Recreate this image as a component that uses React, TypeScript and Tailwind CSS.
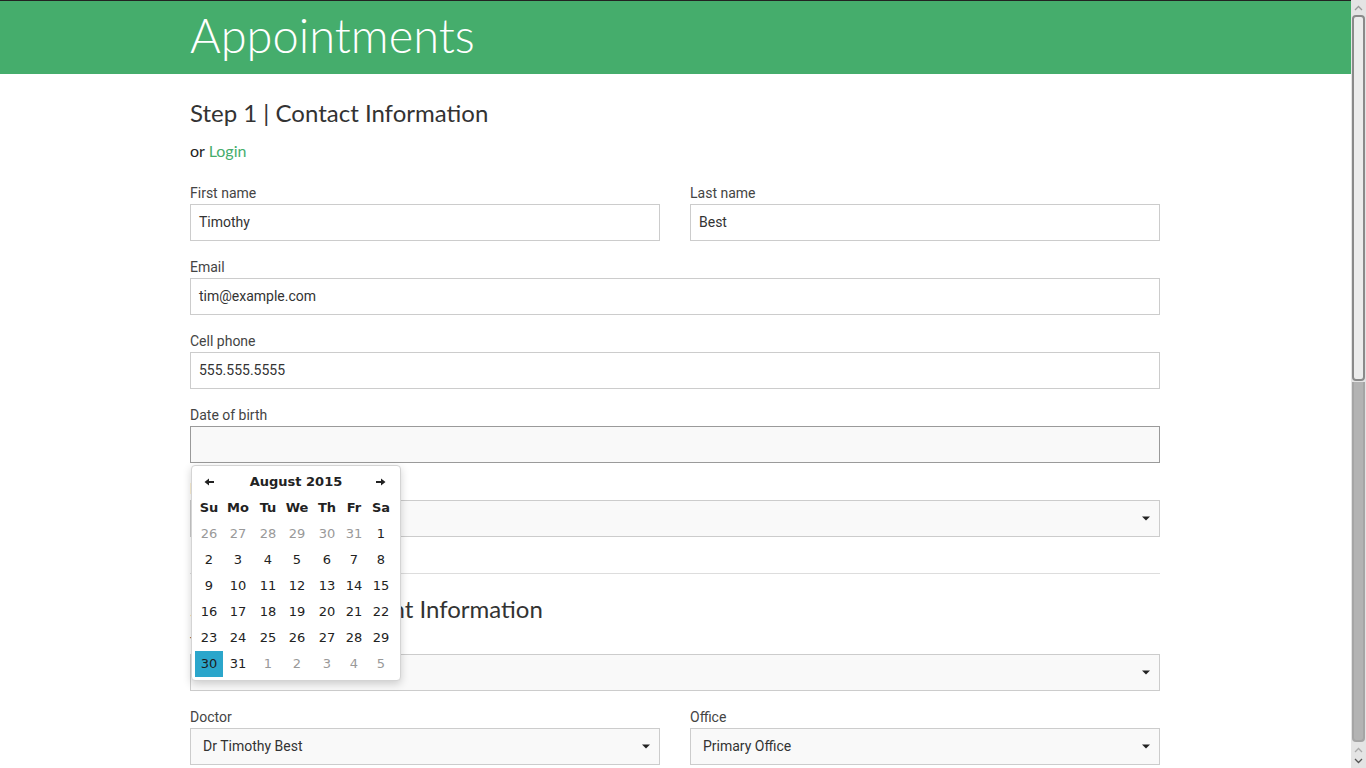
import React from "react"

const days: { d: number; muted?: boolean; active?: boolean }[][] = [
  [{ d: 26, muted: true }, { d: 27, muted: true }, { d: 28, muted: true }, { d: 29, muted: true }, { d: 30, muted: true }, { d: 31, muted: true }, { d: 1 }],
  [{ d: 2 }, { d: 3 }, { d: 4 }, { d: 5 }, { d: 6 }, { d: 7 }, { d: 8 }],
  [{ d: 9 }, { d: 10 }, { d: 11 }, { d: 12 }, { d: 13 }, { d: 14 }, { d: 15 }],
  [{ d: 16 }, { d: 17 }, { d: 18 }, { d: 19 }, { d: 20 }, { d: 21 }, { d: 22 }],
  [{ d: 23 }, { d: 24 }, { d: 25 }, { d: 26 }, { d: 27 }, { d: 28 }, { d: 29 }],
  [{ d: 30, active: true }, { d: 31 }, { d: 1, muted: true }, { d: 2, muted: true }, { d: 3, muted: true }, { d: 4, muted: true }, { d: 5, muted: true }],
]

const weekdays = ["Su", "Mo", "Tu", "We", "Th", "Fr", "Sa"]

const Caret = () => (
  <svg width="8" height="5" viewBox="0 0 8 5" className="shrink-0">
    <path d="M0 0.5 H8 L4 4.5 Z" fill="#222" />
  </svg>
)

const Arrow = ({ left }: { left?: boolean }) => (
  <svg width="10" height="8" viewBox="0 0 10 8" style={left ? { transform: "scaleX(-1)" } : undefined}>
    <path d="M0 3 H5 V0.5 L9.5 4 L5 7.5 V5 H0 Z" fill="#222" />
  </svg>
)

const Label = ({ children }: { children: React.ReactNode }) => (
  <label className="block text-[14px] leading-[20px] text-[#444]">{children}</label>
)

const TextInput = ({ value }: { value: string }) => (
  <div className="mt-px h-[37px] border border-[#ccc] bg-white px-[8px] flex items-center text-[14px] text-[#333]">
    {value}
  </div>
)

const SelectBox = ({ value }: { value?: string }) => (
  <div className="mt-px h-[37px] border border-[#ccc] bg-[#f9f9f9] pl-[12px] pr-[9px] flex items-center justify-between text-[14px] text-[#333]">
    <span>{value}</span>
    <Caret />
  </div>
)

const Calendar = () => (
  <div
    className="absolute left-px top-[calc(100%+2px)] z-10 w-[210px] rounded-[4px] border border-[#d4d4d4] bg-white pl-[3px] pr-[2px] py-[3px] shadow-[0_3px_8px_rgba(0,0,0,0.18)] text-[13px] text-[#222]"
    style={{ fontFamily: '"DejaVu Sans", sans-serif' }}
  >
    <div className="grid grid-cols-[28px_30px_30px_28px_32px_22px_32px]">
      <div className="h-[26px] flex items-center justify-center"><Arrow left /></div>
      <div className="col-span-5 h-[26px] flex items-center justify-center pl-[4px] font-bold">August 2015</div>
      <div className="h-[26px] flex items-center justify-center"><Arrow /></div>
      {weekdays.map((w) => (
        <div key={w} className="h-[26px] flex items-center justify-center font-bold">{w}</div>
      ))}
      {days.flat().map((c, i) => (
        <div
          key={i}
          className={
            c.active
              ? "h-[26px] flex items-center justify-center bg-[#2ba6cb] text-[#1d1d1d]"
              : c.muted
              ? "h-[26px] flex items-center justify-center text-[#999]"
              : "h-[26px] flex items-center justify-center"
          }
        >
          {c.d}
        </div>
      ))}
    </div>
  </div>
)

const Scrollbar = () => (
  <div className="w-[15px] shrink-0 flex flex-col bg-[#e4e4e4]">
    <div className="h-[15px] flex items-center justify-center">
      <svg width="9" height="6" viewBox="0 0 9 6"><path d="M1 5 L4.5 1.5 L8 5" stroke="#999" strokeWidth="1.3" fill="none" /></svg>
    </div>
    <div className="h-[366px] mx-[1px] rounded-[4px] border-2 border-[#8a8a8a] bg-[#ececec]" />
    <div className="flex-1 mx-[1px] rounded-b-[4px] border-x-2 border-b-2 border-[#a5a5a5] bg-[#b3b3b3] mt-px" />
    <div className="h-[26px] flex flex-col items-center justify-center gap-[5px]">
      <svg width="9" height="6" viewBox="0 0 9 6"><path d="M1 5 L4.5 1.5 L8 5" stroke="#aaa" strokeWidth="1.3" fill="none" /></svg>
      <svg width="9" height="6" viewBox="0 0 9 6"><path d="M1 1 L4.5 4.5 L8 1" stroke="#555" strokeWidth="1.3" fill="none" /></svg>
    </div>
  </div>
)

const headingFont = { fontFamily: 'Lato, "Open Sans", sans-serif' }

const App = () => {
  return (
    <div className="flex h-screen overflow-hidden bg-white" style={{ fontFamily: 'Roboto, "Liberation Sans", sans-serif' }}>
      <div className="flex-1 min-w-0">
        <header className="h-[74px] bg-[#45ad6c] border-t border-[#222]">
          <div className="w-[970px] ml-[190px]">
            <h1 className="text-[47px] leading-[68px] font-light text-white" style={headingFont}>
              Appointments
            </h1>
          </div>
        </header>

        <main className="w-[970px] ml-[190px]">
          <h2 className="mt-[24px] text-[24px] leading-[30px] text-[#333]" style={headingFont}>
            Step 1 | Contact Information
          </h2>
          <p className="mt-[13px] text-[16px] leading-[20px] text-[#222]" style={headingFont}>
            or <a className="text-[#45ad6c]">Login</a>
          </p>

          <div className="mt-[22px] grid grid-cols-2 gap-x-[30px]">
            <div>
              <Label>First name</Label>
              <TextInput value="Timothy" />
            </div>
            <div>
              <Label>Last name</Label>
              <TextInput value="Best" />
            </div>
          </div>

          <div className="mt-[16px]">
            <Label>Email</Label>
            <TextInput value="tim@example.com" />
          </div>

          <div className="mt-[16px]">
            <Label>Cell phone</Label>
            <TextInput value="555.555.5555" />
          </div>

          <div className="mt-[16px]">
            <Label>Date of birth</Label>
            <div className="relative">
              <div className="mt-px h-[37px] border border-[#9a9a9a] bg-[#f9f9f9]" />
              <Calendar />
            </div>
          </div>

          <div className="mt-[16px]">
            <Label>Preferred contact</Label>
            <SelectBox />
          </div>

          <hr className="mt-[36px] border-0 border-t border-[#ddd]" />

          <h2 className="mt-[20px] text-[24px] leading-[30px] text-[#333]" style={headingFont}>
            Step 2 | Appointment Information
          </h2>

          <div className="mt-[9px]">
            <Label>Type of visit</Label>
            <SelectBox />
          </div>

          <div className="mt-[16px] grid grid-cols-2 gap-x-[30px]">
            <div>
              <Label>Doctor</Label>
              <SelectBox value="Dr Timothy Best" />
            </div>
            <div>
              <Label>Office</Label>
              <SelectBox value="Primary Office" />
            </div>
          </div>
        </main>
      </div>
      <Scrollbar />
    </div>
  )
}

export default App
